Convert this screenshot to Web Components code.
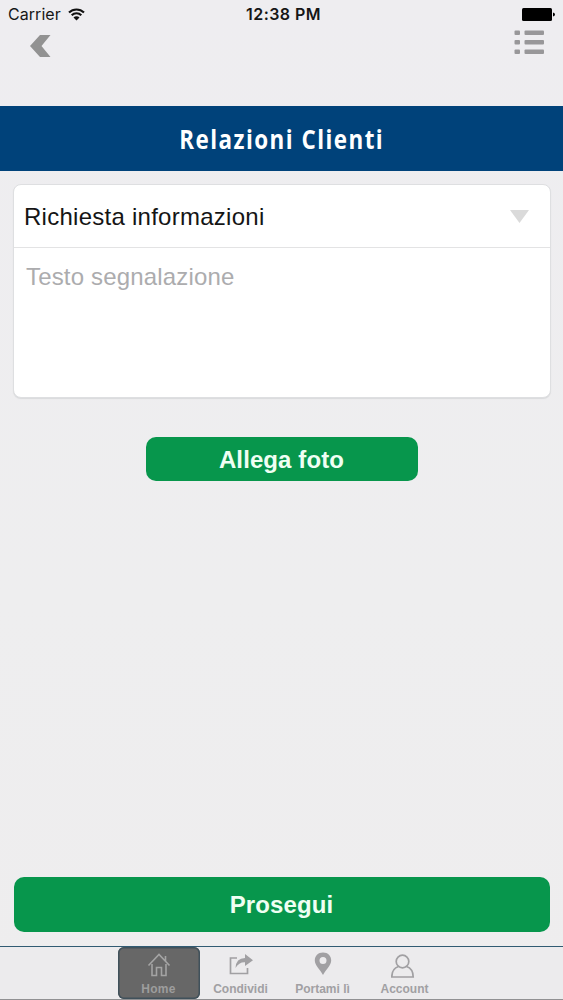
<!DOCTYPE html>
<html lang="it">
<head>
<meta charset="utf-8">
<title>Relazioni Clienti</title>
<style>
html, body { margin: 0; height: 100%; overflow: hidden; background: #eeedef; }
body { font-family: "Liberation Sans", Arial, sans-serif; }
</style>
</head>
<body>
<app-screen></app-screen>
<script>
const define = (name, html) => {
  const template = document.createElement('template');
  template.innerHTML = html;
  customElements.define(name, class extends HTMLElement {
    constructor() {
      super();
      this.attachShadow({ mode: 'open' }).append(template.content.cloneNode(true));
    }
  });
};

define('status-bar', `
<style>
:host { display: grid; grid-template-columns: 1fr auto 1fr; align-items: center; height: 28px; padding: 0 8px; box-sizing: border-box; font: 16px/28px Inter, sans-serif; color: #161616; }
.left { display: flex; align-items: center; gap: 7px; }
.carrier { letter-spacing: 0.05px; }
.time { font-weight: 600; letter-spacing: 0.45px; padding-left: 4px; }
.battery { justify-self: end; }
svg { display: block; }
</style>
<div class="left"><span class="carrier">Carrier</span>
<svg width="17" height="13" viewBox="0 0 17 13" fill="none" stroke="#111" stroke-width="2.1"><path d="M1 4.6A10.6 10.6 0 0 1 16 4.6M3.7 7.3A6.8 6.8 0 0 1 13.3 7.3"/><path d="M8.5 12.4L5.5 9.4A4.2 4.2 0 0 1 11.5 9.4Z" fill="#111" stroke="none"/></svg></div>
<span class="time">12:38 PM</span>
<svg class="battery" width="33" height="13" viewBox="0 0 33 13"><rect width="30" height="13" rx="1.5"/><path d="M31 4.5Q33 4.8 33 6.5T31 8.5Z"/></svg>`);

define('nav-bar', `
<style>
:host { display: flex; justify-content: space-between; align-items: flex-start; height: 78px; box-sizing: border-box; padding: 2px 18px 0 30px; }
svg { display: block; }
.back { margin-top: 5px; }
</style>
<svg class="back" width="21" height="22" viewBox="0 0 21 22"><path d="M10 0H20.5L11.5 11L20.5 22H10L0 11Z" fill="#929292"/></svg>
<svg width="31" height="25" viewBox="0 0 31 25" fill="#989799"><rect x=".5" y=".5" width="5.5" height="4.5" rx="1"/><rect x="10.5" y=".5" width="19.5" height="4.5" rx="1"/><rect x=".5" y="10" width="5.5" height="4.5" rx="1"/><rect x="10.5" y="10" width="19.5" height="4.5" rx="1"/><rect x=".5" y="19.5" width="5.5" height="4.5" rx="1"/><rect x="10.5" y="19.5" width="19.5" height="4.5" rx="1"/></svg>`);

define('title-bar', `
<style>
:host { display: flex; justify-content: center; align-items: center; height: 65px; background: #00427a; color: #fff; box-sizing: border-box; }
span { font: 700 27.5px/65px "Open Sans", sans-serif; letter-spacing: 1.8px; white-space: nowrap; transform: scaleX(.815); }
</style>
<span><slot></slot></span>`);

define('report-form', `
<style>
:host { display: flex; flex-direction: column; margin: 13px 12.5px 0 13px; height: 214px; box-sizing: border-box; border: 1px solid #dedfe1; border-radius: 8px; background: #fff; box-shadow: 0 1px 1px #d9dadc; font-size: 24px; }
.select { display: flex; align-items: center; justify-content: space-between; height: 61px; padding: 1px 21px 0 10px; border-bottom: 1.5px solid #e3e3e4; color: #151515; letter-spacing: .26px; }
.note { padding: 15px 12px; line-height: 27px; color: #acacae; letter-spacing: .17px; }
</style>
<div class="select"><span><slot name="topic"></slot></span><svg width="19" height="13" viewBox="0 0 19 13"><path d="M0 0H19L9.5 13Z" fill="#dadada"/></svg></div>
<div class="note"><slot name="note"></slot></div>`);

define('action-button', `
<style>
:host { display: flex; justify-content: center; align-items: center; border-radius: 10px; background: #07964c; color: #effff3; font-weight: bold; font-size: 24px; box-sizing: border-box; padding-top: 2px; letter-spacing: .1px; }
</style>
<slot></slot>`);

define('tab-item', `
<style>
:host { display: flex; flex-direction: column; align-items: center; width: 82px; height: 52px; box-sizing: border-box; padding-top: 4px; color: #a1a0a3; font: bold 12px/16px "Liberation Sans", sans-serif; }
:host([active]) { background: #676767; border-radius: 6px; box-shadow: inset 0 0 0 1.5px #40515b; color: #9d9d9d; letter-spacing: .3px; }
.label { margin-top: 2px; white-space: nowrap; }
::slotted(svg) { display: block; width: 28px; height: 28px; }
</style>
<slot name="icon"></slot><span class="label"><slot></slot></span>`);

define('tab-bar', `
<style>
:host { display: flex; justify-content: center; height: 54px; box-sizing: border-box; border-top: 1px solid #315b73; border-bottom: 1px solid #919193; background: #ecebed; }
</style>
<slot></slot>`);

define('app-screen', `
<style>
:host { display: flex; flex-direction: column; height: 1000px; width: 563px; background: linear-gradient(#eeedf0, #eeeeef 60%, #eeedee); }
.attach { align-self: center; width: 272px; height: 44.5px; margin-top: 38.5px; }
.next { margin: auto 13.5px 14px; height: 55.5px; }
</style>
<status-bar></status-bar>
<nav-bar></nav-bar>
<title-bar>Relazioni Clienti</title-bar>
<report-form><span slot="topic">Richiesta informazioni</span><span slot="note">Testo segnalazione</span></report-form>
<action-button class="attach">Allega foto</action-button>
<action-button class="next">Prosegui</action-button>
<tab-bar>
<tab-item active><svg slot="icon" viewBox="0 0 28 28" fill="none" stroke="#a4a4a4" stroke-width="1.6"><path d="M3.5 14.5L14 3.5L24.5 14.5M7 13V24.5H11.5V16.5H16.5V24.5H21V13M20.5 10V5"/></svg>Home</tab-item>
<tab-item><svg slot="icon" viewBox="0 0 28 28" fill="none" stroke="#a1a0a3" stroke-width="1.7"><path d="M10 7H3.5V22.5H20.5V17"/><path d="M8.5 17Q9 7 18 7V3L26 9.3L18 15V11.3Q12 11 8.5 17Z" fill="#a1a0a3" stroke="none"/></svg>Condividi</tab-item>
<tab-item><svg slot="icon" viewBox="0 0 28 28"><path d="M14 1.5C9 1.5 5.8 5 5.8 9.5C5.8 14.5 11 18.5 14 24C17 18.5 22.2 14.5 22.2 9.5C22.2 5 19 1.5 14 1.5ZM14 6A3.5 3.5 0 1 1 14 13A3.5 3.5 0 1 1 14 6Z" fill="#a1a0a3" fill-rule="evenodd"/></svg>Portami lì</tab-item>
<tab-item><svg slot="icon" viewBox="0 0 28 28" fill="none" stroke="#a1a0a3" stroke-width="1.7"><circle cx="11.5" cy="10.5" r="6.3"/><path d="M7.5 15.5C3 17 .8 20 .8 26H22.2C22.2 20 20 17 15.5 15.5"/></svg>Account</tab-item>
</tab-bar>`);
</script>
</body>
</html>
